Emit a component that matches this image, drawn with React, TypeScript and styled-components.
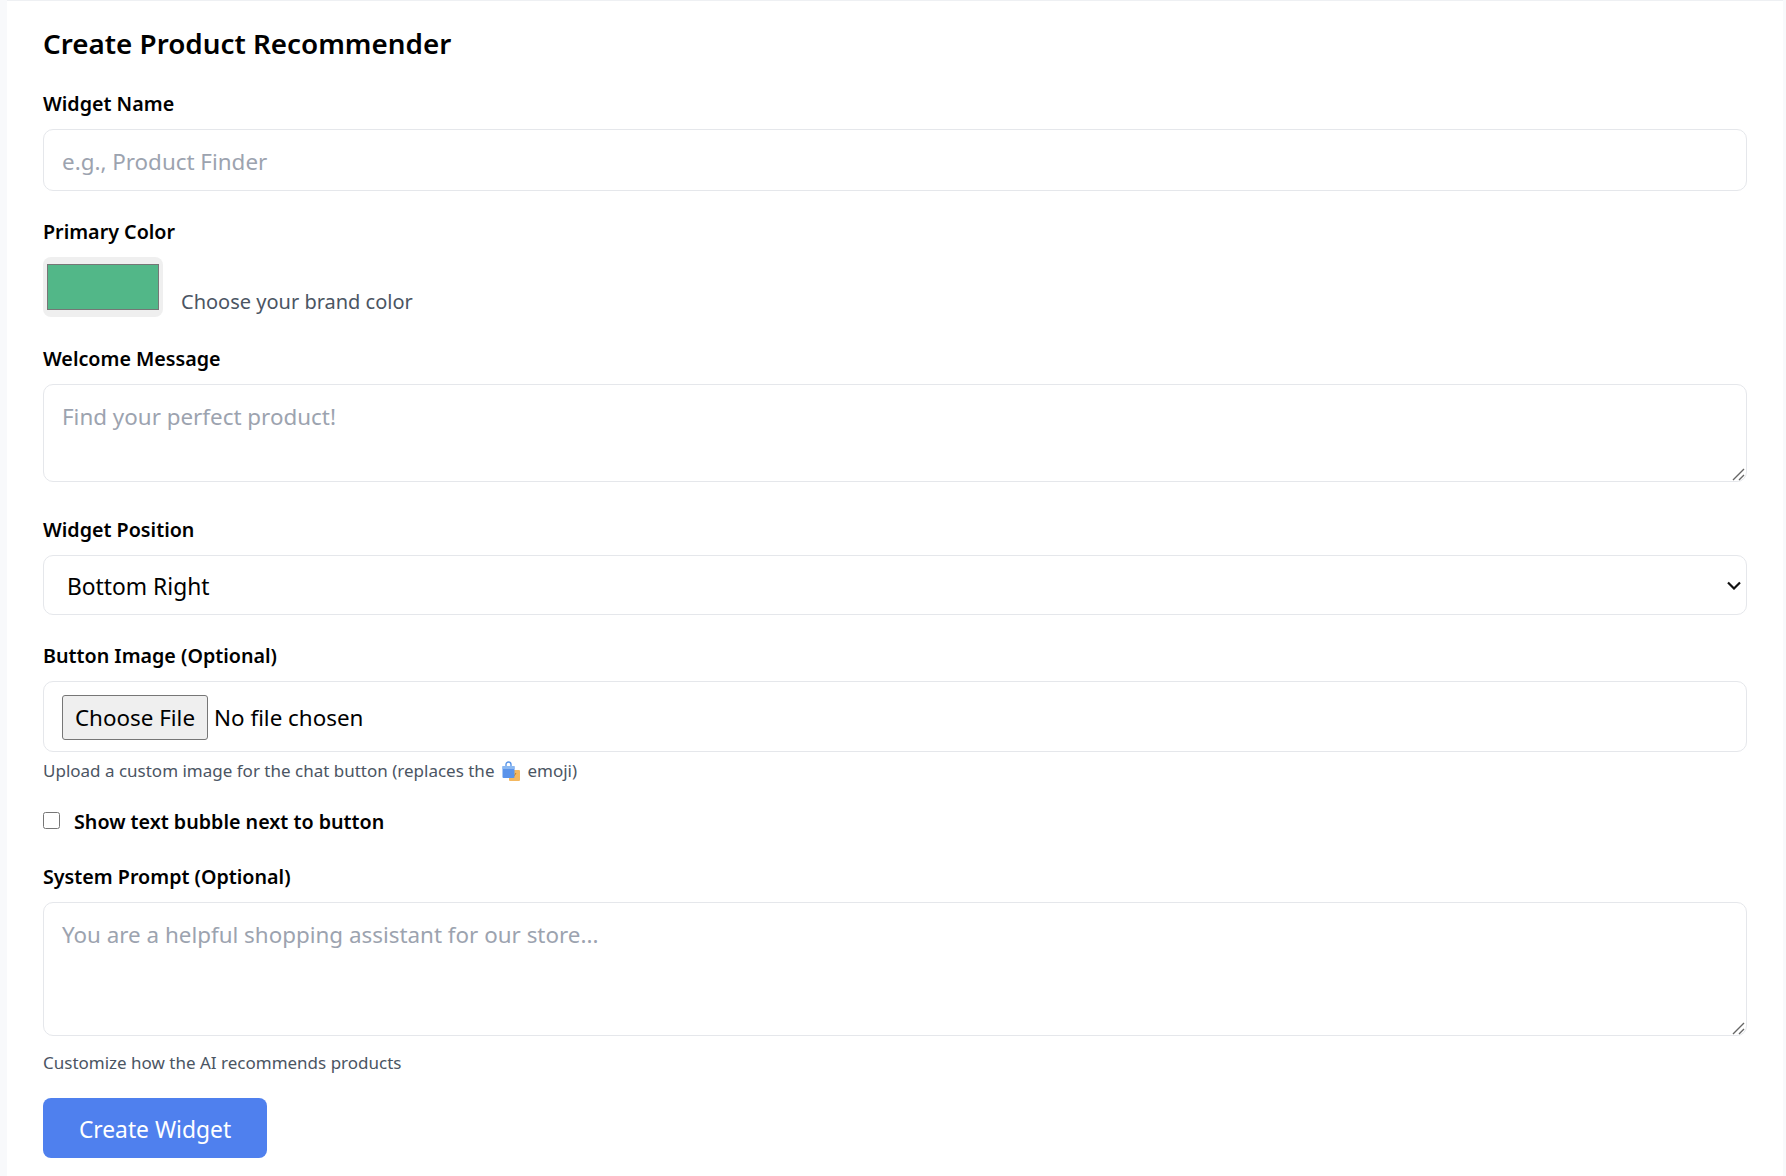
import React from 'react';
import styled, { createGlobalStyle } from 'styled-components';

const GlobalStyle = createGlobalStyle`
  html, body {
    margin: 0;
    padding: 0;
    background: #f8f9fb;
    font-family: 'Noto Sans', 'Open Sans', sans-serif;
  }
  * { box-sizing: border-box; }
`;

const chevron = encodeURIComponent(
  '<svg xmlns="http://www.w3.org/2000/svg" width="16" height="9" viewBox="0 0 16 9"><path d="M2 1.5l6 6 6-6" fill="none" stroke="#111" stroke-width="2.2"/></svg>'
);

const grip = encodeURIComponent(
  '<svg xmlns="http://www.w3.org/2000/svg" width="15" height="15" viewBox="0 0 15 15"><path d="M2 14L13 3M8 14l5-5" fill="none" stroke="#666" stroke-width="1.4"/></svg>'
);

const Card = styled.form`
  margin: 0 3px 0 7px;
  height: 1176px;
  padding: 23px 36px 0;
  background: #fff;
  border-top: 1px solid #eef0f3;
  overflow: hidden;
`;

const Title = styled.h2`
  margin: 0 0 29px;
  font-size: 27.8px;
  line-height: 38px;
  font-weight: 600;
  color: #000;
`;

const Group = styled.div<{ $gap?: number }>`
  margin-bottom: ${(p) => p.$gap ?? 28}px;
`;

const Label = styled.label`
  display: block;
  margin-bottom: 12px;
  font-size: 19.7px;
  line-height: 26px;
  font-weight: 600;
  color: #000;
`;

const fieldCss = `
  display: block;
  width: 100%;
  border: 1px solid #e5e7eb;
  border-radius: 10px;
  background: #fff;
  font-family: inherit;
  font-size: 22.4px;
  color: #000;
  outline: none;
  &::placeholder { color: #9ca3af; opacity: 1; }
`;

const TextInput = styled.input`
  ${fieldCss}
  height: 62px;
  padding: 2px 18px 0;
`;

const TextArea = styled.textarea<{ $height: number }>`
  ${fieldCss}
  height: ${(p) => p.$height}px;
  padding: 17px 18px 0;
  line-height: 30px;
  &::-webkit-resizer {
    background: url("data:image/svg+xml,${grip}") no-repeat;
  }
`;

const SelectBox = styled.select`
  ${fieldCss}
  height: 60px;
  padding: 3px 23px 0;
  font-size: 22.8px;
  appearance: none;
  background: #fff url("data:image/svg+xml,${chevron}") no-repeat right 4px center;
`;

const FileInput = styled.input`
  ${fieldCss}
  height: 71px;
  padding: 13px 18px;
  &::file-selector-button {
    height: 45px;
    width: 146px;
    margin-right: 6px;
    font-family: inherit;
    font-size: 22.4px;
    color: #000;
    background: #efefef;
    border: 1px solid #767676;
    border-radius: 3px;
  }
`;

const ColorRow = styled.div`
  display: flex;
  align-items: flex-end;
  gap: 18px;
`;

const ColorInput = styled.input`
  display: block;
  width: 120px;
  height: 60px;
  padding: 7px 4px;
  border: 0;
  border-radius: 8px;
  background: #efefef;
  &::-webkit-color-swatch-wrapper { padding: 0; }
  &::-webkit-color-swatch { border: 1px solid #767676; }
`;

const ColorHint = styled.span`
  margin-bottom: 2px;
  font-size: 20px;
  line-height: 26px;
  color: #4b5563;
`;

const Hint = styled.div<{ $top?: number }>`
  display: flex;
  align-items: center;
  margin-top: ${(p) => p.$top ?? 7}px;
  font-size: 17px;
  line-height: 24px;
  color: #4b5563;
`;

const BagIcon = styled.svg`
  margin: 0 6px 0 7px;
  flex: none;
`;

const CheckRow = styled.label`
  display: flex;
  align-items: center;
  margin-bottom: 29px;
  font-size: 19.7px;
  line-height: 26px;
  font-weight: 600;
  color: #000;
`;

const CheckBox = styled.input`
  width: 17px;
  height: 17px;
  margin: 0 14px 4px 0;
`;

const SubmitButton = styled.button`
  display: block;
  width: 224px;
  height: 60px;
  padding: 3px 0 0;
  border: 0;
  border-radius: 8px;
  background: #4f80ee;
  color: #fff;
  font-family: inherit;
  font-size: 22.8px;
`;

export default function App() {
  return (
    <>
      <GlobalStyle />
      <Card onSubmit={(e) => e.preventDefault()}>
        <Title>Create Product Recommender</Title>
        <Group>
          <Label>Widget Name</Label>
          <TextInput type="text" placeholder="e.g., Product Finder" />
        </Group>
        <Group $gap={29}>
          <Label>Primary Color</Label>
          <ColorRow>
            <ColorInput type="color" defaultValue="#52b788" />
            <ColorHint>Choose your brand color</ColorHint>
          </ColorRow>
        </Group>
        <Group $gap={35}>
          <Label>Welcome Message</Label>
          <TextArea $height={98} placeholder="Find your perfect product!" />
        </Group>
        <Group>
          <Label>Widget Position</Label>
          <SelectBox defaultValue="bottom-right">
            <option value="bottom-right">Bottom Right</option>
            <option value="bottom-left">Bottom Left</option>
          </SelectBox>
        </Group>
        <Group $gap={26}>
          <Label>Button Image (Optional)</Label>
          <FileInput type="file" />
          <Hint>
            Upload a custom image for the chat button (replaces the
            <BagIcon width="20" height="20" viewBox="0 0 20 20">
              <rect x="8" y="9" width="11" height="11" rx="1" fill="#f4b860" />
              <path d="M13 15l2-3" stroke="#c77f22" strokeWidth="1" fill="none" />
              <path d="M5 5V3.5a2.5 2.5 0 0 1 5 0V5" stroke="#5b96e8" strokeWidth="1.4" fill="none" />
              <rect x="1.5" y="5" width="12" height="12" rx="1" fill="#5b93ea" />
              <rect x="1.5" y="5" width="12" height="3" fill="#8ab8f2" />
            </BagIcon>
            emoji)
          </Hint>
        </Group>
        <CheckRow>
          <CheckBox type="checkbox" />
          Show text bubble next to button
        </CheckRow>
        <Group $gap={23}>
          <Label>System Prompt (Optional)</Label>
          <TextArea $height={134} placeholder="You are a helpful shopping assistant for our store..." />
          <Hint $top={15}>Customize how the AI recommends products</Hint>
        </Group>
        <SubmitButton type="submit">Create Widget</SubmitButton>
      </Card>
    </>
  );
}
